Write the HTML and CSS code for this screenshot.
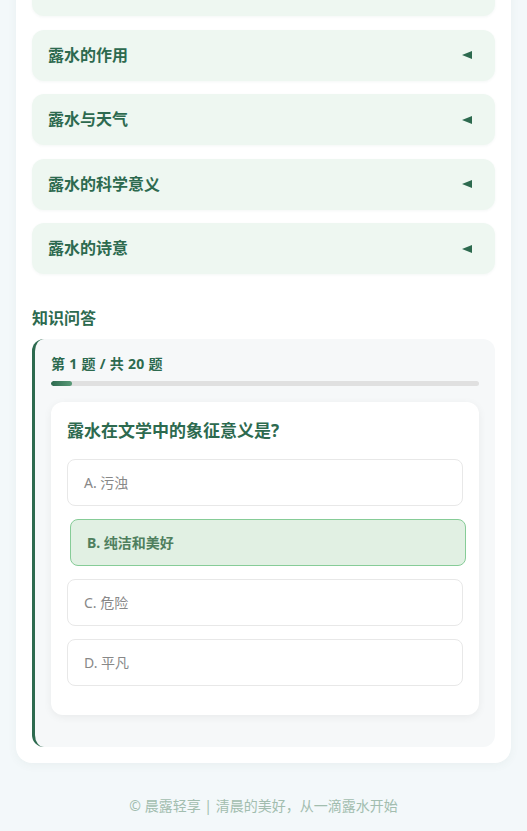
FILE: index.html
```html
<!DOCTYPE html>
<html>
	<head>
		<meta charset="UTF-8">
		<title>晨露轻享</title>
		<link rel="stylesheet" href="styles.css">
	</head>
	<body>
		<div class="main">
			<ul class="accordion">
				<!--上面一项只露出底部-->
				<li class="item"><span class="title"></span><i class="arrow"></i></li>
				<li class="item"><span class="title">露水的作用</span><i class="arrow"></i></li>
				<li class="item"><span class="title">露水与天气</span><i class="arrow"></i></li>
				<li class="item"><span class="title">露水的科学意义</span><i class="arrow"></i></li>
				<li class="item"><span class="title">露水的诗意</span><i class="arrow"></i></li>
			</ul>

			<h3 class="sectionTitle">知识问答</h3>
			<div class="quiz">
				<div class="quizHead">第 1 题 / 共 20 题</div>
				<div class="progress"><div class="bar" style="width: 5%;"></div></div>

				<div class="questionCard">
					<p class="question">露水在文学中的象征意义是?</p>
					<ul class="options">
						<li>A. 污浊</li>
						<li class="selected">B. 纯洁和美好</li>
						<li>C. 危险</li>
						<li>D. 平凡</li>
					</ul>
				</div>
			</div>
		</div>

		<div class="footer">© 晨露轻享 | 清晨的美好，从一滴露水开始</div>
	</body>
</html>
```

FILE: styles.css
```css
*{
	margin: 0;
	padding: 0;
	box-sizing: border-box;
}
ul,li{
	list-style: none;
}

body{
	padding: 0 16px;
	background-color: #f3f8fa;
	font-family: "Noto Sans", "Noto Sans CJK SC", sans-serif;
	color: #2d6a4f;
}

.main{
	margin-top: -51px;
	padding: 16px;
	background-color: #fff;
	border-radius: 16px;
	box-shadow: 0 2px 10px rgba(60,100,80,.06);
}

/* 折叠列表 */
.accordion .item{
	display: flex;
	align-items: center;
	justify-content: space-between;
	height: 51px;
	margin-bottom: 13.5px;
	padding: 0 16px;
	background-color: #eef7f1;
	border-radius: 12px;
	box-shadow: 0 1px 3px rgba(45,106,79,.05);
}
.accordion .item:last-child{
	margin-bottom: 0;
}
.accordion .title{
	font-size: 16px;
	font-weight: bold;
	line-height: 19px;
}
.accordion .arrow{
	width: 0;
	height: 0;
	margin-right: 7px;
	border-top: 4.5px solid transparent;
	border-bottom: 4.5px solid transparent;
	border-right: 10px solid #2d6a4f;
}

.sectionTitle{
	margin-top: 33px;
	margin-bottom: 10px;
	font-size: 16px;
	line-height: 22px;
}

/* 问答 */
.quiz{
	padding: 16px 16px 32px;
	background-color: #f6f8f9;
	border-left: 3px solid #2d6a4f;
	border-radius: 12px;
}
.quizHead{
	font-size: 14px;
	font-weight: bold;
	line-height: 18px;
	letter-spacing: .3px;
}
.progress{
	height: 5px;
	margin-top: 8px;
	background-color: #e0e0e0;
	border-radius: 3px;
	overflow: hidden;
}
.progress .bar{
	height: 100%;
	background: linear-gradient(90deg, #2d6a4f, #5a9a78);
	border-radius: 3px;
}

.questionCard{
	margin-top: 16px;
	padding: 18px 16px 16px;
	background-color: #fff;
	border-radius: 12px;
	box-shadow: 0 2px 8px rgba(0,0,0,.06);
}
.question{
	margin-bottom: 17px;
	font-size: 17px;
	font-weight: bold;
	line-height: 22px;
}
.options li{
	height: 47px;
	margin-bottom: 13px;
	padding: 0 16px;
	border: 1px solid #e8e8e8;
	border-radius: 8px;
	font-size: 14px;
	line-height: 45px;
	color: #888;
	background-color: #fff;
}
.options li.selected{
	transform: translateX(3px);
	background-color: #e1f0e3;
	border-color: #86cc97;
	color: #4f7f5e;
	font-weight: bold;
}

.footer{
	padding: 33px 0 15px;
	text-align: center;
	font-size: 14px;
	line-height: 20px;
	color: #a2bdaf;
}
```
